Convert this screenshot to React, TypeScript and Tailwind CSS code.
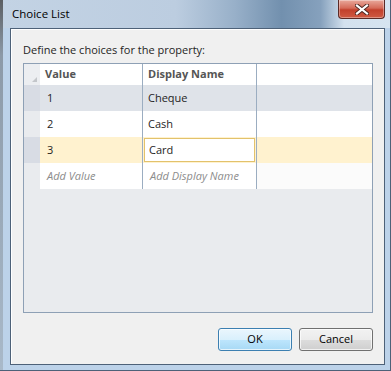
const rows = [
  { value: "1", name: "Cheque", tone: "gray" },
  { value: "2", name: "Cash", tone: "white" },
  { value: "3", name: "Card", tone: "current" },
];

function CloseButton() {
  return (
    <div className="absolute right-[6px] top-0 flex h-[19px] w-[47px] items-center justify-center rounded-b-[4px] border border-t-0 border-[#5b2a26] bg-[linear-gradient(to_bottom,#e9a99c_0%,#d56a58_45%,#c2402c_55%,#cf5a43_100%)] shadow-[inset_0_0_0_1px_rgba(255,255,255,0.35)]">
      <svg width="14" height="11" viewBox="0 0 14 11">
        <path
          d="M2 1.5 L12 9.5 M12 1.5 L2 9.5"
          stroke="#4a2520"
          strokeWidth="4"
          strokeLinecap="square"
        />
        <path
          d="M2 1.5 L12 9.5 M12 1.5 L2 9.5"
          stroke="#ffffff"
          strokeWidth="2.2"
          strokeLinecap="square"
        />
      </svg>
    </div>
  );
}

export default function App() {
  return (
    <div className="relative h-[371px] w-[391px] overflow-hidden bg-[#bcd2e9] font-['Open_Sans',sans-serif] text-[11px] text-[#1e1e1e]">
      {/* title bar */}
      <div className="flex h-[28px] items-center bg-[linear-gradient(to_right,#c3d3e4_0%,#bccde0_45%,#98b0c9_60%,#7290ae_72%,#86a1bd_82%,#d3e1ee_88%,#d6e4f0_100%)] pl-[12px]">
        <span className="text-[11.5px] leading-none text-black">Choice List</span>
      </div>
      <div className="absolute left-0 top-0 h-full w-[3px] bg-[linear-gradient(to_bottom,#5c5f63_0%,#8c9aa8_15%,#a9b9c9_100%)]" />
      <CloseButton />

      {/* client area */}
      <div className="ml-[10px] mr-[6px] flex h-[337px] flex-col border border-[#4d6178] bg-[#f0f0f0] pl-[12px] pr-[11px] shadow-[inset_1px_1px_0_#ffffff]">
        <div className="pt-[13px] leading-[16px]">Define the choices for the property:</div>

        {/* grid */}
        <div className="mt-[5px] flex h-[250px] flex-col border border-[#8ea0b5] bg-[#e9ebee]">
          {/* header */}
          <div className="flex h-[21px]">
            <div className="relative w-[16px] bg-[#eceef1]">
              <div className="absolute bottom-[3px] right-[3px] h-0 w-0 border-b-[5px] border-l-[5px] border-b-[#c3c6ca] border-l-transparent" />
            </div>
            <div className="flex w-[102px] items-center bg-white pl-[5px] font-bold text-[#555555]">Value</div>
            <div className="w-px bg-[#9badc1]" />
            <div className="flex w-[113px] items-center bg-white pl-[5px] font-bold text-[#555555]">Display Name</div>
            <div className="w-px bg-[#9badc1]" />
            <div className="flex-1 bg-white" />
          </div>

          {rows.map((r) => {
            const cell =
              r.tone === "gray" ? "bg-[#dfe3e9]" : r.tone === "current" ? "bg-[#fff2cf]" : "bg-white";
            const head =
              r.tone === "gray" ? "bg-[#d8dce4]" : r.tone === "current" ? "bg-[#d8dce4]" : "bg-[#e9ebee]";
            return (
              <div key={r.value} className="flex h-[26px]">
                <div className={`w-[16px] ${head}`} />
                <div className={`flex w-[102px] items-center pl-[7px] ${cell}`}>{r.value}</div>
                <div className="w-px bg-[#9badc1]" />
                <div className={`flex w-[113px] items-center ${cell}`}>
                  {r.tone === "current" ? (
                    <div className="ml-px flex h-[24px] w-[111px] items-center border border-[#e2c26c] bg-white pl-[4px]">
                      {r.name}
                    </div>
                  ) : (
                    <span className="pl-[5px]">{r.name}</span>
                  )}
                </div>
                <div className="w-px bg-[#9badc1]" />
                <div className={`flex-1 ${cell}`} />
              </div>
            );
          })}

          {/* new row */}
          <div className="flex h-[26px]">
            <div className="w-[16px] bg-[#e9ebee]" />
            <div className="flex w-[102px] items-center bg-white pl-[7px] italic text-[#8c8c8c]">Add Value</div>
            <div className="w-px bg-[#9badc1]" />
            <div className="flex w-[113px] items-center bg-white pl-[7px] italic text-[#8c8c8c]">Add Display Name</div>
            <div className="w-px bg-[#9badc1]" />
            <div className="flex-1 bg-[#fbfbfb]" />
          </div>
        </div>

        {/* buttons */}
        <div className="mt-[15px] flex justify-end gap-[7px]">
          <button className="h-[23px] w-[74px] rounded-[3px] border border-[#3c7fb1] bg-[linear-gradient(to_bottom,#eaf6fd_0%,#d9f0fc_50%,#bee6fd_50%,#a7d9f5_100%)] text-[11px] text-black shadow-[inset_0_0_0_1px_rgba(255,255,255,0.7)]">
            OK
          </button>
          <button className="h-[23px] w-[74px] rounded-[3px] border border-[#707070] bg-[linear-gradient(to_bottom,#f2f2f2_0%,#ebebeb_50%,#dddddd_50%,#cfcfcf_100%)] text-[11px] text-black shadow-[inset_0_0_0_1px_rgba(255,255,255,0.7)]">
            Cancel
          </button>
        </div>
      </div>
      <div className="absolute bottom-0 left-0 h-px w-full bg-[#4d6178]" />
      <div className="absolute right-0 top-0 h-full w-px bg-[#4d6178]" />
    </div>
  );
}
